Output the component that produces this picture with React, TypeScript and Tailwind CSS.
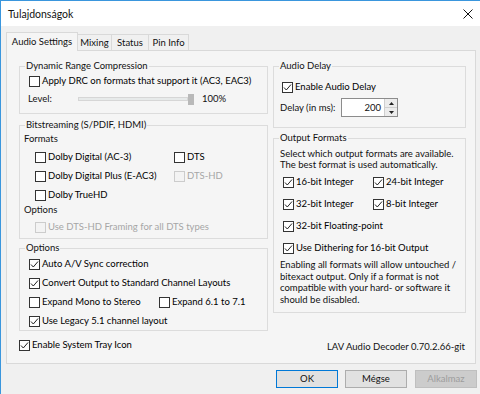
import React from "react";

type CheckProps = {
    label: string;
    checked?: boolean;
    disabled?: boolean;
    className?: string;
};

function Check({ label, checked, disabled, className = "" }: CheckProps) {
    return (
        <div className={`flex items-center h-[12px] whitespace-nowrap ${className}`}>
            <span
                className={`w-[11px] h-[11px] shrink-0 border flex items-center justify-center ${
                    disabled ? "border-[#cccccc] bg-[#f3f3f3]" : "border-[#333333] bg-white"
                }`}
            >
                {checked && (
                    <svg width="9" height="9" viewBox="0 0 9 9">
                        <polyline points="1,4.5 3.3,7 8,1.5" fill="none" stroke="#222" strokeWidth="1" />
                    </svg>
                )}
            </span>
            <span className={`ml-[2px] ${disabled ? "text-[#a6a6a6]" : "text-black"}`}>{label}</span>
        </div>
    );
}

type GroupProps = {
    title: string;
    className?: string;
    children: React.ReactNode;
};

function Group({ title, className = "", children }: GroupProps) {
    return (
        <fieldset className={`border border-[#dcdcdc] ${className}`}>
            <legend className="ml-[5px] px-[1px] leading-[12px] h-[12px]">{title}</legend>
            {children}
        </fieldset>
    );
}

function Tab({ label, active, className = "" }: { label: string; active?: boolean; className?: string }) {
    return active ? (
        <div className={`h-[19px] bg-[#f5f5f5] border border-b-0 border-[#d9d9d9] flex items-center justify-center pb-[1px] ${className}`}>
            {label}
        </div>
    ) : (
        <div className={`h-[16px] mb-[1px] bg-[#f0f0f0] border border-b-0 border-l-0 border-[#d9d9d9] flex items-center justify-center ${className}`}>
            {label}
        </div>
    );
}

export default function App() {
    return (
        <div className="w-[480px] h-[394px] overflow-hidden bg-[#f0f0f0] border-t border-l border-[#3a96dd] font-['Lato',sans-serif] text-[9.5px] leading-[12px] text-[#111]">
            {/* title bar */}
            <div className="h-[25px] bg-white flex items-center justify-between pl-[7px] pr-[6px]">
                <span className="text-[10.5px]">Tulajdonságok</span>
                <svg width="10" height="10" viewBox="0 0 10 10" className="mr-[1px]">
                    <path d="M0.5 0.5 L9.5 9.5 M9.5 0.5 L0.5 9.5" stroke="#111" strokeWidth="1" />
                </svg>
            </div>

            <div className="pl-[5px] pt-[6px]">
                {/* tabs */}
                <div className="flex items-end relative z-10 -mb-px">
                    <Tab label="Audio Settings" active className="w-[72px]" />
                    <Tab label="Mixing" className="w-[34px]" />
                    <Tab label="Status" className="w-[37px]" />
                    <Tab label="Pin Info" className="w-[40px]" />
                </div>

                {/* tab panel */}
                <div className="w-[470px] h-[314px] border border-[#d9d9d9] bg-[#f5f5f5] pl-[12px] pt-[9px] flex gap-[5px]">
                    {/* left column */}
                    <div className="w-[249px] flex flex-col">
                        <Group title="Dynamic Range Compression" className="h-[54px]">
                            <div className="pl-[9px] mt-[3px]">
                                <Check label="Apply DRC on formats that support it (AC3, EAC3)" />
                            </div>
                            <div className="flex items-center h-[12px] mt-[6px] pl-[8px]">
                                <span className="w-[50px]">Level:</span>
                                <div className="relative w-[116px] h-[12px] flex items-center">
                                    <div className="w-[110px] h-[4px] bg-[#e7eaea] border border-[#d6d6d6]" />
                                    <div className="absolute left-[110px] top-[1px] w-[6px] h-[11px] bg-[#b9b9b9]" />
                                </div>
                                <span className="ml-[8px]">100%</span>
                            </div>
                        </Group>

                        <Group title="Bitstreaming (S/PDIF, HDMI)" className="h-[120px] mt-[5px]">
                            <div className="pl-[4px] mt-[2px]">Formats</div>
                            <div className="pl-[15px] mt-[6px] flex flex-col gap-[7px]">
                                <div className="flex">
                                    <Check label="Dolby Digital (AC-3)" className="w-[139px]" />
                                    <Check label="DTS" />
                                </div>
                                <div className="flex">
                                    <Check label="Dolby Digital Plus (E-AC3)" className="w-[139px]" />
                                    <Check label="DTS-HD" disabled />
                                </div>
                                <Check label="Dolby TrueHD" />
                            </div>
                            <div className="pl-[4px] mt-[3px]">Options</div>
                            <div className="pl-[15px] mt-[5px]">
                                <Check label="Use DTS-HD Framing for all DTS types" disabled />
                            </div>
                        </Group>

                        <Group title="Options" className="h-[89px] mt-[3px]">
                            <div className="pl-[9px] mt-[4px] flex flex-col gap-[7px]">
                                <Check label="Auto A/V Sync correction" checked />
                                <Check label="Convert Output to Standard Channel Layouts" checked />
                                <div className="flex">
                                    <Check label="Expand Mono to Stereo" className="w-[130px]" />
                                    <Check label="Expand 6.1 to 7.1" />
                                </div>
                                <Check label="Use Legacy 5.1 channel layout" checked />
                            </div>
                        </Group>

                        <Check label="Enable System Tray Icon" checked className="mt-[8px]" />
                    </div>

                    {/* right column */}
                    <div className="w-[193px] flex flex-col">
                        <Group title="Audio Delay" className="h-[68px]">
                            <div className="pl-[8px] mt-[9px]">
                                <Check label="Enable Audio Delay" checked />
                            </div>
                            <div className="flex items-center pl-[6px] mt-[5px]">
                                <span className="w-[61px]">Delay (in ms):</span>
                                <div className="flex w-[57px] h-[19px] border border-[#8c8c8c] bg-white">
                                    <div className="flex-1 flex items-center justify-end pr-[3px]">200</div>
                                    <div className="w-[13px] flex flex-col border-l border-[#cfcfcf]">
                                        <div className="flex-1 bg-[#ececec] border-b border-[#cfcfcf] flex items-center justify-center">
                                            <svg width="5" height="3" viewBox="0 0 5 3">
                                                <path d="M0 3 L2.5 0 L5 3 Z" fill="#222" />
                                            </svg>
                                        </div>
                                        <div className="flex-1 bg-[#ececec] flex items-center justify-center">
                                            <svg width="5" height="3" viewBox="0 0 5 3">
                                                <path d="M0 0 L2.5 3 L5 0 Z" fill="#222" />
                                            </svg>
                                        </div>
                                    </div>
                                </div>
                            </div>
                        </Group>

                        <Group title="Output Formats" className="h-[181px] mt-[4px]">
                            <p className="pl-[6px] mt-[4px] leading-[11px] whitespace-nowrap">
                                Select which output formats are available.
                                <br />
                                The best format is used automatically.
                            </p>
                            <div className="pl-[9px] mt-[6px] flex flex-col gap-[10px]">
                                <div className="flex">
                                    <Check label="16-bit Integer" checked className="w-[90px]" />
                                    <Check label="24-bit Integer" checked />
                                </div>
                                <div className="flex">
                                    <Check label="32-bit Integer" checked className="w-[90px]" />
                                    <Check label="8-bit Integer" checked />
                                </div>
                                <Check label="32-bit Floating-point" checked />
                                <Check label="Use Dithering for 16-bit Output" checked />
                            </div>
                            <p className="pl-[6px] mt-[5px] leading-[11.5px] whitespace-nowrap">
                                Enabling all formats will allow untouched /
                                <br />
                                bitexact output. Only if a format is not
                                <br />
                                compatible with your hard- or software it
                                <br />
                                should be disabled.
                            </p>
                        </Group>

                        <div className="mt-[28px] pr-[1px] text-right">LAV Audio Decoder 0.70.2.66-git</div>
                    </div>
                </div>

                {/* buttons */}
                <div className="flex justify-end gap-[7px] pr-[3px] mt-[6px]">
                    <button className="w-[62px] h-[18px] bg-[#e1e1e1] border border-[#0078d7]">OK</button>
                    <button className="w-[62px] h-[18px] bg-[#e1e1e1] border border-[#adadad]">Mégse</button>
                    <button className="w-[62px] h-[18px] bg-[#cccccc] border border-[#bfbfbf] text-[#9d9d9d] ml-[1px]">
                        Alkalmaz
                    </button>
                </div>
            </div>
        </div>
    );
}
